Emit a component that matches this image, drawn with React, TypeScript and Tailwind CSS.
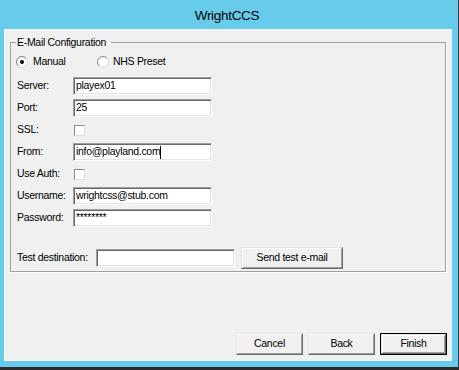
import type { ReactNode } from 'react'

function TextBox({ value, width = 'w-[139px]', caret = false }: { value?: string; width?: string; caret?: boolean }) {
  return (
    <div className={`${width} h-[18px] bg-white border border-t-[#a0a0a0] border-l-[#a0a0a0] border-b-white border-r-white shadow-[inset_1px_1px_0_#696969,inset_-1px_-1px_0_#e3e3e3] flex items-center px-[2px] text-black whitespace-nowrap overflow-hidden`}>
      <span>{value}</span>
      {caret && <span className="w-px h-[13px] bg-black" />}
    </div>
  )
}

function CheckBox() {
  return (
    <div className="ml-px w-[11px] h-[11px] bg-white border border-t-[#8c8c8c] border-l-[#8c8c8c] border-b-[#dcdcdc] border-r-[#dcdcdc]" />
  )
}

function Radio({ checked = false }: { checked?: boolean }) {
  return (
    <svg width="12" height="12" viewBox="0 0 12 12" className="shrink-0">
      <circle cx="6" cy="6" r="5.5" fill="#fff" stroke="#d4d4d4" />
      <path d="M2.1 9.9 A5.5 5.5 0 0 1 9.9 2.1" fill="none" stroke="#8a8a8a" />
      {checked && <circle cx="6" cy="6" r="2" fill="#000" />}
    </svg>
  )
}

function Row({ label, children }: { label: string; children: ReactNode }) {
  return (
    <div className="flex h-[22px] items-center">
      <span className="w-[56px] shrink-0">{label}</span>
      {children}
    </div>
  )
}

function Button({ label, width, isDefault = false }: { label: string; width: string; isDefault?: boolean }) {
  const face = (
    <div className="flex-1 flex items-center justify-center bg-[#f0f0f0] border border-t-white border-l-white border-b-[#a0a0a0] border-r-[#a0a0a0] text-black">
      {label}
    </div>
  )
  return (
    <div className={`${width} h-[22px] flex ${isDefault ? 'border border-black' : 'border border-t-[#e3e3e3] border-l-[#e3e3e3] border-b-[#696969] border-r-[#696969]'}`}>
      {isDefault ? (
        <div className="flex-1 flex border border-t-[#e3e3e3] border-l-[#e3e3e3] border-b-[#696969] border-r-[#696969]">{face}</div>
      ) : (
        face
      )}
    </div>
  )
}

export default function App() {
  return (
    <div className="w-[459px] h-[370px] bg-[#67cbeb] border-r border-r-[#3c3c3c] border-b-[3px] border-b-[#2a2a2a] flex flex-col font-['Liberation_Sans',Arial,sans-serif] text-[10.5px] tracking-[-0.3px] text-black">
      {/* title bar */}
      <div className="h-[29px] shrink-0 flex items-center justify-center pt-[4px] pr-[4px] text-[13.5px] tracking-[-0.3px] text-black">
        WrightCCS
      </div>

      {/* client area */}
      <div className="flex-1 mb-[6px] ml-[4px] mr-[6px] bg-[#f0f0f0] border-l border-b border-white flex flex-col">
        <fieldset className="mt-[7px] ml-[5px] mr-[6px] border border-[#a0a0a0] shadow-[1px_1px_0_#fff] p-0">
          <legend className="ml-[5px] pl-px pr-[5px] leading-[12px]">E-Mail Configuration</legend>
          <div className="pl-[6px] pb-[2px] flex flex-col">
            <div className="mt-[6px] h-[16px] flex items-center -ml-px">
              <div className="w-[81px] flex items-center gap-[5px]">
                <Radio checked />
                <span>Manual</span>
              </div>
              <div className="flex items-center gap-[4px]">
                <Radio />
                <span>NHS Preset</span>
              </div>
            </div>
            <div className="mt-[5px] flex flex-col">
              <Row label="Server:">
                <TextBox value="playex01" />
              </Row>
              <Row label="Port:">
                <TextBox value="25" />
              </Row>
              <Row label="SSL:">
                <CheckBox />
              </Row>
              <Row label="From:">
                <TextBox value="info@playland.com" caret />
              </Row>
              <Row label="Use Auth:">
                <CheckBox />
              </Row>
              <Row label="Username:">
                <TextBox value="wrightcss@stub.com" />
              </Row>
              <Row label="Password:">
                <TextBox value="********" />
              </Row>
            </div>
            <div className="mt-[18px] h-[22px] flex items-center">
              <span className="w-[79px] shrink-0">Test destination:</span>
              <TextBox />
              <div className="ml-[6px]">
                <Button label="Send test e-mail" width="w-[102px]" />
              </div>
            </div>
          </div>
        </fieldset>

        <div className="flex-1" />

        <div className="flex justify-end gap-[5px] pr-[5px] pb-[5px]">
          <Button label="Cancel" width="w-[67px]" />
          <Button label="Back" width="w-[67px]" />
          <Button label="Finish" width="w-[67px]" isDefault />
        </div>
      </div>
    </div>
  )
}
